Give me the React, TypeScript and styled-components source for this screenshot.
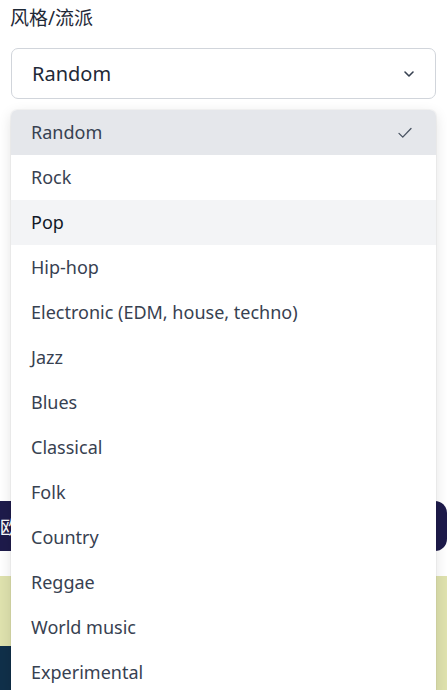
import React from "react";
import styled, { createGlobalStyle } from "styled-components";

const GlobalStyle = createGlobalStyle`
  html, body {
    margin: 0;
    padding: 0;
    background: #ffffff;
    overflow: hidden;
  }
  body {
    font-family: "Noto Sans", "Noto Sans CJK SC", sans-serif;
  }
`;

const Page = styled.div`
  position: relative;
  width: 447px;
  height: 690px;
  overflow: hidden;
`;

const Field = styled.div`
  padding: 4px 11px 0 11px;
`;

const Label = styled.div`
  font-size: 19px;
  line-height: 28px;
  color: #1f2937;
  margin-left: -1px;
`;

const SelectBox = styled.div`
  margin-top: 16px;
  height: 51px;
  box-sizing: border-box;
  border: 1px solid #d1d5db;
  border-radius: 7px;
  display: flex;
  align-items: center;
  justify-content: space-between;
  padding: 0 18px 0 20px;
  font-size: 20px;
  color: #1f2937;
`;

const SubmitBar = styled.div`
  margin: 402px 0 0 -4px;
  width: 451px;
  height: 50px;
  background: #1e1b4b;
  border-radius: 0 12px 12px 0;
  color: #ffffff;
  font-size: 18px;
  display: flex;
  align-items: center;
  padding-left: 4px;
  box-sizing: border-box;
`;

const Card = styled.div`
  margin-top: 25px;
  display: grid;
  grid-template-columns: 60px 1fr;
  grid-template-rows: 70px 60px;
  background: #dfe2ae;
`;

const CardShade = styled.div`
  grid-column: 1;
  grid-row: 2;
  background: #10304a;
`;

const Menu = styled.ul`
  position: absolute;
  top: 110px;
  left: 11px;
  width: 425px;
  margin: 0;
  padding: 0;
  list-style: none;
  background: #ffffff;
  border-radius: 6px 6px 0 0;
  box-shadow: 0 4px 14px rgba(0, 0, 0, 0.12), 0 0 0 1px rgba(0, 0, 0, 0.03);
  overflow: hidden;
`;

const Option = styled.li<{ $state?: "selected" | "hover" }>`
  height: 45px;
  display: flex;
  align-items: center;
  justify-content: space-between;
  padding: 0 22px 0 20px;
  font-size: 18px;
  color: ${(p) => (p.$state === "hover" ? "#111827" : "#374151")};
  background: ${(p) =>
    p.$state === "selected" ? "#e5e7eb" : p.$state === "hover" ? "#f3f4f6" : "#ffffff"};

  span {
    margin-top: -2px;
  }
`;

const Chevron = () => (
  <svg width="16" height="16" viewBox="0 0 24 24" fill="none" stroke="#374151" strokeWidth="2.4" strokeLinecap="round" strokeLinejoin="round">
    <path d="M6 9l6 6 6-6" />
  </svg>
);

const Check = () => (
  <svg width="18" height="18" viewBox="0 0 24 24" fill="none" stroke="#4b5563" strokeWidth="1.8" strokeLinecap="round" strokeLinejoin="round">
    <path d="M4 12.5l5 5L20 6" />
  </svg>
);

const genres = [
  "Random",
  "Rock",
  "Pop",
  "Hip-hop",
  "Electronic (EDM, house, techno)",
  "Jazz",
  "Blues",
  "Classical",
  "Folk",
  "Country",
  "Reggae",
  "World music",
  "Experimental",
];

export default function App() {
  return (
    <Page>
      <GlobalStyle />
      <Field>
        <Label>风格/流派</Label>
        <SelectBox>
          <span>Random</span>
          <Chevron />
        </SelectBox>
      </Field>
      <SubmitBar>欧</SubmitBar>
      <Card>
        <CardShade />
      </Card>
      <Menu>
        {genres.map((g, i) => (
          <Option key={g} $state={i === 0 ? "selected" : i === 2 ? "hover" : undefined}>
            <span>{g}</span>
            {i === 0 && <Check />}
          </Option>
        ))}
      </Menu>
    </Page>
  );
}
